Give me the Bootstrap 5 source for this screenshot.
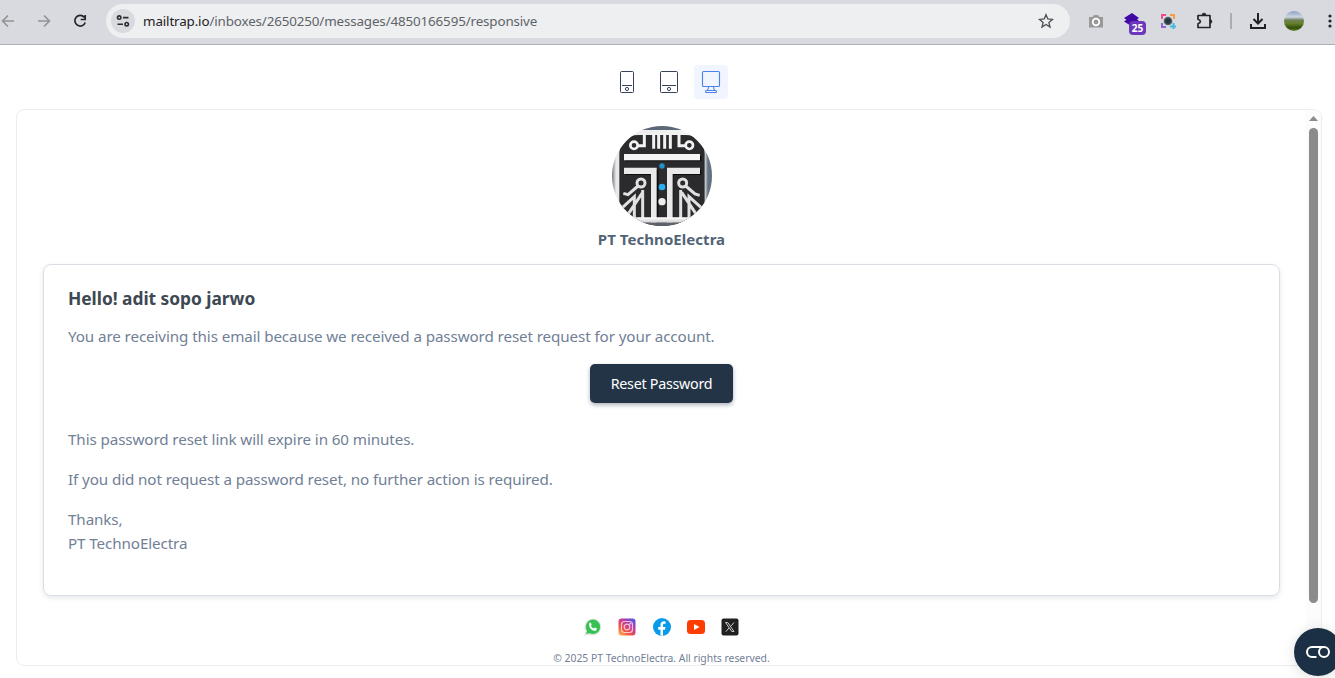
<!DOCTYPE html>
<html lang="en">
<head>
<meta charset="utf-8">
<meta name="viewport" content="width=device-width, initial-scale=1">
<title>Responsive preview</title>
<link href="https://cdn.jsdelivr.net/npm/bootstrap@5.3.0/dist/css/bootstrap.min.css" rel="stylesheet">
<style>
body{font-family:"Noto Sans","Open Sans",sans-serif;background:#fff;height:100vh;overflow:hidden;color:#718096}
.toolbar{height:45px;background:#d9dadf;border-bottom:1px solid #aeafb4;padding-bottom:2px}
.tool{width:36px;height:36px;flex:none;display:flex;align-items:center;justify-content:center;position:relative}
.tool:first-child{margin-left:-10px}
.tool.divide{width:18px}
.omnibox{width:964px;height:34px;margin:0 8px;background:#edeff1;border-radius:17px;padding:0 16px 0 5px;flex:none}
.site-info{width:24px;height:24px;border-radius:50%;background:#d9dadf;margin-right:8px}
.address{font-size:13.4px;line-height:20px;color:#5f6368;white-space:nowrap;letter-spacing:-.14px}
.address b{font-weight:400;color:#1f2023}
.count{position:absolute;left:15px;top:18px;width:17px;height:14px;border-radius:4px;background:#6c37bd;color:#fff;font:bold 10px/14px "Noto Sans",sans-serif;text-align:center}
.devices{padding:20px 0 10px;gap:8px;padding-left:3px}
.device{width:34px;height:34px;border-radius:4px}
.device.active{background:#f0f5ff}
.preview{margin:0 13px 0 16px;height:557px;border:1px solid #ebedef;border-radius:8px;overflow:hidden;flex:none}
.mail{padding:16px 26px 0}
.brand{font-weight:700;font-size:15px;line-height:26px;color:#526377;white-space:nowrap;letter-spacing:.05px}
.message{width:1237px;height:332px;margin-top:12px;padding:20px 24px;border:1px solid #d9dee5;border-radius:8px;box-shadow:0 2px 5px rgba(40,60,80,.12)}
.message h1{font-size:17.4px;line-height:27px;font-weight:700;color:#3d4852;margin:0 0 12px;letter-spacing:-.04px}
.message p{font-size:15.2px;line-height:24px;margin:0 0 16px;white-space:nowrap;letter-spacing:-.1px}
.reset{width:143px;height:39px;margin:0 0 24px;padding:0;background:#243447;color:#fff;font-size:14.3px;letter-spacing:-.27px;line-height:39px;border:0;border-radius:5px;box-shadow:0 2px 4px rgba(20,30,60,.35);white-space:nowrap}
.reset:hover{background:#1b2a3b;color:#fff}
.socials{margin-top:21px;gap:14px}
.copyright{font-size:10.4px;line-height:16px;margin-top:13px;white-space:nowrap;letter-spacing:-.02px}
.scroll{width:15px;background:#fcfcfc;padding-top:6px;flex:none}
.thumb{width:9px;height:475px;border-radius:5px;background:#8b8b8b;margin-top:7px}
.chat{position:fixed;left:1294px;top:628px;width:48px;height:48px;border-radius:50%;background:#1b3045;box-shadow:0 2px 14px rgba(0,0,0,.13)}
svg{display:block;flex:none}
</style>
</head>
<body class="d-flex flex-column">
<header class="toolbar d-flex align-items-center flex-shrink-0">
  <span class="tool"><svg width="14" height="14" fill="none" stroke="#929397" stroke-width="1.6"><path d="M13 7H2M7 1.500L1.500 7 7 12.500"/></svg></span>
  <span class="tool"><svg width="14" height="14" fill="none" stroke="#929397" stroke-width="1.6"><path d="M1 7h11M7 1.500L12.500 7 7 12.500"/></svg></span>
  <span class="tool"><svg width="14" height="14" fill="none" stroke="#242529" stroke-width="1.7"><path d="M11.300 3.400A5.300 5.300 0 1 0 12.200 8.400M12.200 1v4.500H7.700"/></svg></span>
  <div class="omnibox d-flex align-items-center">
    <span class="site-info d-flex align-items-center justify-content-center"><svg width="14" height="12" fill="none" stroke="#2b2c30" stroke-width="1.600"><circle cx="3.200" cy="2.600" r="1.700"/><path d="M7 2.600h5.500M1.500 9.200h5.500"/><circle cx="10.700" cy="9.200" r="1.700"/></svg></span>
    <span class="address"><b>mailtrap.io</b>/inboxes/2650250/messages/4850166595/responsive</span>
    <svg class="ms-auto" width="16" height="16" fill="none" stroke="#4b4e53" stroke-width="1.300"><path d="M8 1.700l1.800 4.300 4.600.4-3.500 3 1.100 4.600L8 11.500 4 14l1.100-4.600-3.500-3 4.600-.4z"/></svg>
  </div>
  <span class="tool"><svg width="16" height="14"><path d="M1 3h3.500L6 1h4l1.500 2H15v10.500H1z" fill="#999"/><circle cx="8" cy="8" r="3.300" fill="#999" stroke="#fff" stroke-width="1.700"/></svg></span>
  <span class="tool"><svg width="18" height="18"><path d="M9 1l7 5-2 1.500 2 1.500-7 5.500L1 9.500 3.500 7.800 1 6z" fill="#4108a5"/></svg><span class="count">25</span></span>
  <span class="tool"><svg width="16" height="16" fill="none" stroke-width="2"><path d="M2 6V2h4" stroke="#ef4c93"/><path d="M10 2h4v4" stroke="#f79b45"/><path d="M2 10v4h4" stroke="#9163d7"/><path d="M10 13.500h6M13.500 10v6" stroke="#40b9dc"/><circle cx="8" cy="8" r="3.600" fill="#29363f" stroke="#53616b" stroke-width="1.500"/></svg></span>
  <span class="tool"><svg width="20" height="20"><path d="M4 4.500h12v12H4v-3.700c3.200-1 3.200-3.600 0-4.600z" fill="none" stroke="#242529" stroke-width="1.700" stroke-linejoin="round"/><path d="M8 4a2 2 0 0 1 4 0zM16 8.500a2 2 0 0 1 0 4z" fill="#242529" stroke="#242529" stroke-width=".5"/></svg></span>
  <span class="tool divide"><svg width="2" height="16"><path d="M0 0h2v16H0z" fill="#a9acb5"/></svg></span>
  <span class="tool"><svg width="18" height="18" fill="none" stroke="#202125" stroke-width="2"><path d="M9 1v10M4.500 7L9 11.500 13.500 7M2 12v4h14v-4"/></svg></span>
  <span class="tool"><svg width="20" height="20"><defs><clipPath id="face"><circle cx="10" cy="10" r="10"/></clipPath><linearGradient id="land" x2="0" y2="1"><stop offset="0" stop-color="#8a9fc5"/><stop offset=".3" stop-color="#ced6e3"/><stop offset=".45" stop-color="#71805e"/><stop offset=".62" stop-color="#648129"/><stop offset=".85" stop-color="#324d0b"/><stop offset="1" stop-color="#618d22"/></linearGradient></defs><path clip-path="url(#face)" fill="url(#land)" d="M0 0h20v20H0z"/></svg></span>
  <span class="tool"><svg width="4" height="16" fill="#242529"><circle cx="2" cy="3" r="1.600"/><circle cx="2" cy="8" r="1.600"/><circle cx="2" cy="13" r="1.600"/></svg></span>
</header>

<nav class="devices d-flex justify-content-center flex-shrink-0">
  <span class="device d-flex align-items-center justify-content-center"><svg width="16" height="24" fill="none" stroke="#364258"><rect x="1.500" y="1.500" width="13" height="21" rx="1"/><path d="M3 15.500h10"/><circle cx="8" cy="19" r="1.600"/></svg></span>
  <span class="device d-flex align-items-center justify-content-center"><svg width="20" height="24" fill="none" stroke="#364258"><rect x="1.500" y="1.500" width="17" height="21" rx="1"/><path d="M3 15.500h14"/><circle cx="10" cy="19" r="1.600"/></svg></span>
  <span class="device active d-flex align-items-center justify-content-center"><svg width="20" height="24" fill="none" stroke="#4c82e9" stroke-width="1.100"><rect x="1.500" y="1.500" width="17" height="15" rx="1"/><path d="M7.500 16.500q0 3-1.500 4M12.500 16.500q0 3 1.500 4"/><rect x="4.500" y="20.500" width="11" height="2" rx="1"/></svg></span>
</nav>

<main class="preview d-flex">
  <div class="mail flex-grow-1 d-flex flex-column align-items-center">
    <svg width="100" height="100" viewBox="66 33 300 300">
      <defs>
        <clipPath id="round"><circle cx="216" cy="183" r="150"/></clipPath>
        <linearGradient id="rim" x2="1"><stop stop-color="#737882"/><stop offset=".04" stop-color="#e8e8e8"/><stop offset=".92" stop-color="#f7f7f7"/><stop offset=".96" stop-color="#647181"/></linearGradient>
        <linearGradient id="metal" x2="0" y2="1"><stop stop-color="#fff"/><stop offset="1" stop-color="#cfcfcf"/></linearGradient>
      </defs>
      <g clip-path="url(#round)">
        <path fill="url(#rim)" d="M66 33h300v300H66z"/><path fill="#5c6878" d="M66 33h300v12H66z"/>
        <rect x="88" y="60" width="256" height="292" rx="56" fill="#2b2b2d"/>
        <g fill="none" stroke="#0c0c0c" stroke-width="16" transform="translate(4 4)"><path d="M102 127h228M102 168h91v150M330 168h-92v150"/></g>
        <g fill="none" stroke="#f2f2f2" stroke-width="9">
          <path d="M143 92h20V55M287 92h-20V55M191 55v46M206 55v46M224 55v46M241 55v46"/>
          <circle cx="132" cy="91" r="11" stroke-width="8"/><circle cx="298" cy="91" r="11" stroke-width="8"/>
        </g>
        <path fill="#f5f5f5" d="M102 117h228v19H102z"/>
        <path fill="#e9e9e9" d="M102 158h98v165h-17V177h-81zM330 158h-99v165h17V177h82z"/>
        <g fill="none" stroke="#e1e1e1" stroke-width="9">
          <circle cx="153" cy="204" r="12"/><circle cx="278" cy="204" r="12"/>
          <path d="M144 213l-30 26-14-4M287 213l28 24 14 4M84 290l49-45v70M158 225v90M158 232l-50 75M347 290l-50-45v70M272 225v90M275 232l50 75"/>
        </g>
        <path fill="url(#metal)" d="M80 307h270v16H80z"/><path fill="#5d626b" d="M80 323h270v12H80z"/>
        <circle cx="216" cy="153" r="8" fill="#2491cf"/><circle cx="216" cy="216" r="10" fill="#28aef2"/><circle cx="216" cy="260" r="11" fill="#ededed"/>
      </g>
    </svg>
    <div class="brand"><span>PT TechnoElectra</span></div>
    <section class="message d-flex flex-column align-items-start flex-shrink-0">
      <h1>Hello! adit sopo jarwo</h1>
      <p>You are receiving this email because we received a password reset request for your account.</p>
      <button class="btn reset align-self-center" type="button">Reset Password</button>
      <p>This password reset link will expire in 60 minutes.</p>
      <p>If you did not request a password reset, no further action is required.</p>
      <p>Thanks,<br>PT TechnoElectra</p>
    </section>
    <div class="socials d-flex">
      <svg width="20" height="20"><path d="M1 19l1.500-4.500A8.500 8.500 0 1 1 6 17.700z" fill="#e4e8e5"/><circle cx="10" cy="9.800" r="7.200" fill="#38c153"/><path d="M3 17l1.500-4 3 3z" fill="#38c153"/><path d="M6.200 6.500q1.200-1.800 2 0l.5 1.200-.8 1.100q1 1.900 2.900 2.700l1-1.100 2 1q.2 2.300-2.300 2.300c-3.500-.2-6-3.700-5.300-7.200" fill="#fff"/></svg>
      <svg width="21" height="20"><defs><linearGradient id="insta" x1="0" y1="1" x2=".8" y2="0"><stop stop-color="#ffc34c"/><stop offset=".35" stop-color="#f35343"/><stop offset=".7" stop-color="#c238a0"/><stop offset="1" stop-color="#5954df"/></linearGradient></defs><g transform="translate(-.5 0)"><rect x="2" y="1.500" width="17" height="17" rx="3" fill="url(#insta)"/><g fill="none" stroke="#fff" stroke-width="1.200" opacity=".7"><rect x="5" y="4.500" width="11" height="11" rx="3"/><circle cx="10.500" cy="10" r="2.800"/></g><circle cx="13.800" cy="6.800" r=".8" fill="#fff"/></g></svg>
      <svg width="20" height="20"><circle cx="10" cy="10" r="9" fill="#079be9"/><path d="M8.500 18.800v-6H6.200V10h2.300V8c0-2.500 1.400-3.700 3.600-3.700l1.500.2v2.300h-1.300c-1 0-1.300.6-1.300 1.400V10h2.500l-.5 2.800h-2v6z" fill="#fff"/></svg>
      <svg width="20" height="20"><rect x="1" y="3" width="18" height="14" rx="3.500" fill="#ff3d00"/><path d="M8 7l5.500 3L8 13z" fill="#fff"/></svg>
      <svg width="20" height="20"><rect x="1.500" y="1.500" width="17" height="17" rx="2" fill="#202020"/><path d="M5.500 5.500h2.200l6.300 9h-2.200zM14 5.500l-3.500 4M9 11l-3.200 3.700" fill="none" stroke="#ccc" stroke-width="1"/></svg>
    </div>
    <div class="copyright">© 2025 PT TechnoElectra. All rights reserved.</div>
  </div>
  <div class="scroll d-flex flex-column align-items-center"><svg width="9" height="5"><path d="M4.500 0L9 5H0z" fill="#8b8b8b"/></svg><div class="thumb"></div></div>
</main>
<div class="chat d-flex align-items-center justify-content-center"><svg width="26" height="16" fill="none" stroke="#fff" stroke-width="2"><path d="M19 3H7a5 5 0 0 0 0 10h4.500"/><circle cx="19" cy="8" r="5"/></svg></div>
<script src="https://cdn.jsdelivr.net/npm/bootstrap@5.3.0/dist/js/bootstrap.bundle.min.js"></script>
</body>
</html>
